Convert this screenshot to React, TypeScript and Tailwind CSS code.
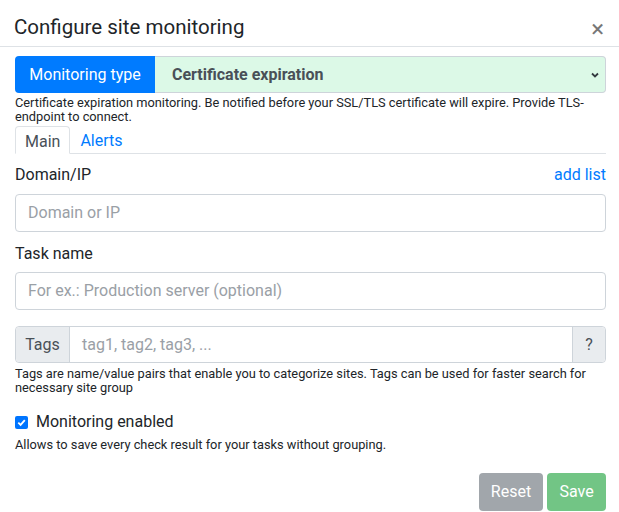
import React from 'react';

export default function App() {
  return (
    <div className="w-[619px] h-[512px] overflow-hidden bg-white text-[#212529] font-['Roboto','Liberation_Sans',sans-serif]">
      {/* header */}
      <div className="flex h-[47px] items-start justify-between border-b border-[#dee2e6] pl-[14px] pr-[15px] pt-[13px]">
        <h5 className="text-[20.5px] font-normal leading-[28px]">Configure site monitoring</h5>
        <button className="mt-[2px] text-[24px] font-normal leading-[28px] text-[#777]">×</button>
      </div>

      <div className="pl-[15px] pr-[13px] pt-[9px]">
        {/* monitoring type */}
        <div className="flex h-[37px]">
          <span className="flex w-[140px] items-center justify-center rounded-l-[4px] bg-[#007bff] text-[16px] text-white">
            Monitoring type
          </span>
          <div className="flex flex-1 items-center justify-between rounded-r-[4px] border border-l-0 border-[#ced4da] bg-[#dcf9e7] pl-[17px] pr-[5px]">
            <span className="text-[16px] font-bold text-[#495057]">Certificate expiration</span>
            <svg width="10" height="10" viewBox="0 0 10 10">
              <path d="M2 3.5 L5 6.5 L8 3.5" stroke="#343a40" strokeWidth="1.8" fill="none" />
            </svg>
          </div>
        </div>
        <p className="text-[12.8px] leading-[13.5px] pt-[3px]">
          Certificate expiration monitoring. Be notified before your SSL/TLS certificate will expire. Provide TLS-endpoint to connect.
        </p>

        {/* tabs */}
        <div className="mt-[3px] flex h-[28px] border-b border-[#dee2e6]">
          <span className="-mb-px flex items-center rounded-t-[4px] border border-b-white border-[#dee2e6] bg-white px-[9px] pt-[3px] text-[16px] text-[#495057]">
            Main
          </span>
          <span className="flex items-center px-[10px] pt-[3px] text-[16px] text-[#007bff]">Alerts</span>
        </div>

        {/* domain */}
        <div className="mt-[9px] flex items-center justify-between text-[16px] leading-[24px]">
          <span>Domain/IP</span>
          <span className="text-[#007bff]">add list</span>
        </div>
        <div className="mt-[7px] flex h-[38px] items-center rounded-[4px] border border-[#ced4da] px-[12px] text-[16px] text-[#9aa0a6]">
          Domain or IP
        </div>

        <div className="mt-[10px] text-[16px] leading-[24px]">Task name</div>
        <div className="mt-[6px] flex h-[38px] items-center rounded-[4px] border border-[#ced4da] px-[12px] text-[16px] text-[#9aa0a6]">
          For ex.: Production server (optional)
        </div>

        {/* tags */}
        <div className="mt-[16px] flex h-[37px] rounded-[4px] border border-[#ced4da] text-[16px]">
          <span className="flex w-[54px] items-center justify-center rounded-l-[4px] border-r border-[#ced4da] bg-[#e9ecef] text-[#495057]">
            Tags
          </span>
          <span className="flex flex-1 items-center px-[12px] text-[#9aa0a6]">tag1, tag2, tag3, ...</span>
          <span className="flex w-[33px] items-center justify-center rounded-r-[4px] border-l border-[#ced4da] bg-[#e9ecef] text-[#495057]">
            ?
          </span>
        </div>
        <p className="pt-[4px] text-[12.8px] leading-[13.5px]">
          Tags are name/value pairs that enable you to categorize sites. Tags can be used for faster search for necessary site group
        </p>

        {/* checkbox */}
        <label className="mt-[16px] flex items-center gap-[8px] text-[16px] leading-[24px]">
          <span className="flex h-[13px] w-[13px] items-center justify-center rounded-[2px] bg-[#0075ff]">
            <svg width="11" height="11" viewBox="0 0 12 12">
              <path d="M2.5 6.2 L5 8.6 L9.6 3.4" stroke="white" strokeWidth="2" fill="none" />
            </svg>
          </span>
          Monitoring enabled
        </label>
        <p className="mt-[3px] text-[12.8px] leading-[15px]">
          Allows to save every check result for your tasks without grouping.
        </p>

        {/* buttons */}
        <div className="mt-[21px] flex justify-end gap-[4px]">
          <button className="h-[38px] w-[64px] rounded-[4px] bg-[#a1a6ab] text-[16px] text-white">Reset</button>
          <button className="h-[38px] w-[59px] rounded-[4px] bg-[#72c585] text-[16px] text-white">Save</button>
        </div>
      </div>
    </div>
  );
}
